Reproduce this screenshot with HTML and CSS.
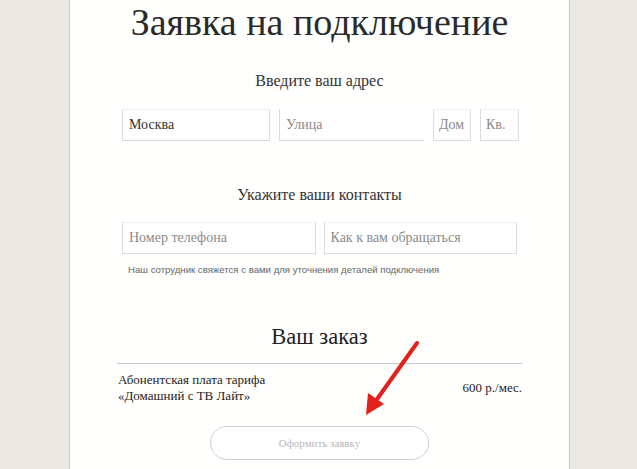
FILE: index.html
```html
<!DOCTYPE html>
<html lang="ru">
<head>
<meta charset="utf-8">
<link rel="stylesheet" href="styles.css">
</head>
<body>
<div class="panel">
  <h1 class="title">Заявка на подключение</h1>
  <h2 class="section">Введите ваш адрес</h2>
  <div class="row addr">
    <input class="field city" value="Москва">
    <input class="field street" placeholder="Улица">
    <input class="field house" placeholder="Дом">
    <input class="field flat" placeholder="Кв.">
  </div>
  <h2 class="section contacts">Укажите ваши контакты</h2>
  <div class="row phone">
    <input class="field wide" placeholder="Номер телефона">
    <input class="field wide" placeholder="Как к вам обращаться">
  </div>
  <p class="note">Наш сотрудник свяжется с вами для уточнения деталей подключения</p>
  <h2 class="order-title">Ваш заказ</h2>
  <div class="order">
    <div class="order-name">Абонентская плата тарифа<br>«Домашний с ТВ Лайт»</div>
    <div class="order-price">600 р./мес.</div>
  </div>
  <div class="actions"><button class="submit">Оформить заявку</button></div>
</div>
<svg class="arrow" width="637" height="469" viewBox="0 0 637 469">
  <line x1="417" y1="343" x2="375" y2="402" stroke="#e3201b" stroke-width="4" stroke-linecap="round"/>
  <polygon points="366,415 368,393 384,404" fill="#e3201b"/>
</svg>
</body>
</html>
```
FILE: styles.css
```css
html, body {
  margin: 0;
  padding: 0;
  height: 100%;
  overflow: hidden;
}
body {
  background: #ebe9e4;
  font-family: "Liberation Serif", "DejaVu Serif", serif;
  color: #222;
}
.panel {
  width: 501px;
  height: 469px;
  margin-left: 69px;
  background: #fffffd;
  border-left: 1px solid #c9c9c6;
  border-right: 1px solid #c9c9c6;
  box-sizing: border-box;
  padding: 0 47px;
  display: flex;
  flex-direction: column;
}
.title {
  margin: 0;
  font-weight: normal;
  font-size: 38px;
  line-height: 44px;
  text-align: center;
  color: #2a2a2a;
}
.section {
  margin: 27px 0 0;
  font-weight: normal;
  font-size: 16px;
  line-height: 20px;
  text-align: center;
  color: #333;
}
.section.contacts {
  margin-top: 44px;
}
.row {
  display: flex;
  margin: 0 5px;
}
.addr {
  margin-top: 18px;
}
.phone {
  margin-top: 17px;
  gap: 8px;
}
.field {
  box-sizing: border-box;
  height: 32px;
  border: 1px solid #dcdcdc;
  border-top-color: #efefef;
  background: #fff;
  font-family: "Liberation Serif", "DejaVu Serif", serif;
  font-size: 14px;
  color: #333;
  padding: 0 6px;
  margin: 0;
  outline: none;
}
.field::placeholder {
  color: #8a8a8a;
}
.city { width: 148px; margin-right: 9px; }
.street { width: 146px; margin-right: 8px; border-top-color: #fff; border-right-color: #fff; }
.house { width: 38px; margin-right: 9px; padding: 0 5px; }
.flat { width: 39px; padding: 0 5px; }
.wide { width: 195px; }
.note {
  margin: 9px 0 0 11px;
  font-family: "Liberation Sans", Arial, sans-serif;
  font-size: 9.6px;
  line-height: 14px;
  color: #666;
}
.order-title {
  margin: 46px 0 0;
  font-weight: normal;
  font-size: 22.5px;
  line-height: 28px;
  text-align: center;
  color: #222;
}
.order {
  margin-top: 12px;
  border-top: 1px solid #c8c8c8;
  padding-top: 8px;
  display: flex;
  justify-content: space-between;
  align-items: center;
  font-size: 13px;
  line-height: 16px;
  color: #222;
}
.order-name {
  padding-left: 1px;
}
.actions {
  margin-top: 22px;
  display: flex;
  justify-content: center;
}
.submit {
  width: 219px;
  height: 34px;
  border: 1px solid #cfcfcf;
  border-radius: 17px;
  background: #fff;
  font-family: "Liberation Serif", "DejaVu Serif", serif;
  font-size: 11px;
  color: #b8b8b8;
}
.arrow {
  position: absolute;
  left: 0;
  top: 0;
  pointer-events: none;
}
```
